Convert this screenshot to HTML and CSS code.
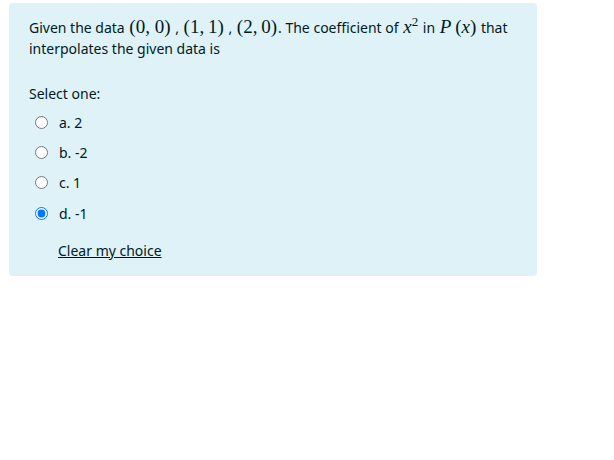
FILE: index.html
```html
<!DOCTYPE html>
<html lang="en">
<head>
    <meta charset="UTF-8">
    <title>Question</title>
    <link rel="stylesheet" href="styles.css">
</head>
<body>
    <div class="que">
        <div class="qtext">
            Given the data <span class="math">(0, 0)</span> , <span class="math">(1,&thinsp;1)</span> , <span class="math">(2,&thinsp;0)</span>. The coefficient of <span class="math"><i>x</i><sup>2</sup></span> in <span class="math"><i>P</i>&thinsp;(<i>x</i>)</span> that interpolates the given data is
        </div>

        <div class="prompt">Select one:</div>
        <div class="answer">
            <label class="option"><input type="radio" name="q1"> a. 2</label>
            <label class="option"><input type="radio" name="q1"> b. -2</label>
            <label class="option"><input type="radio" name="q1"> c. 1</label>
            <label class="option"><input type="radio" name="q1" checked> d. -1</label>
        </div>
        <a href="#" class="clear-choice">Clear my choice</a>
    </div>
</body>
</html>
```

FILE: styles.css
```css
body {
    font-family: "Noto Sans", "Open Sans", sans-serif;
    font-size: 14px;
    color: #001a1e;
    background-color: #fff;
    margin: 0;
    padding: 3px 9px;
}

.que {
    width: 528px;
    box-sizing: border-box;
    background-color: #def2f8;
    border-radius: 4px;
    padding: 12px 20px 15px;
}

.qtext {
    line-height: 21px;
    margin-bottom: 24px;
}

.math {
    font-family: "Liberation Serif", serif;
    font-size: 19px;
    line-height: 19px;
    padding: 0 1px;
}

.math i {
    font-style: italic;
}

.math sup {
    font-size: 13px;
    line-height: 13px;
    vertical-align: 7px;
}

.prompt {
    line-height: 21px;
}

.answer {
    display: flex;
    flex-direction: column;
    padding-left: 5px;
    margin-top: 3px;
}

.option {
    display: flex;
    align-items: center;
    height: 30.4px;
}

.option input {
    margin: 0 11px 0 1px;
    width: 13px;
    height: 13px;
}

.clear-choice {
    display: inline-block;
    margin-top: 11px;
    margin-left: 29px;
    line-height: 21px;
    color: #001a1e;
    text-decoration: underline;
}
```
